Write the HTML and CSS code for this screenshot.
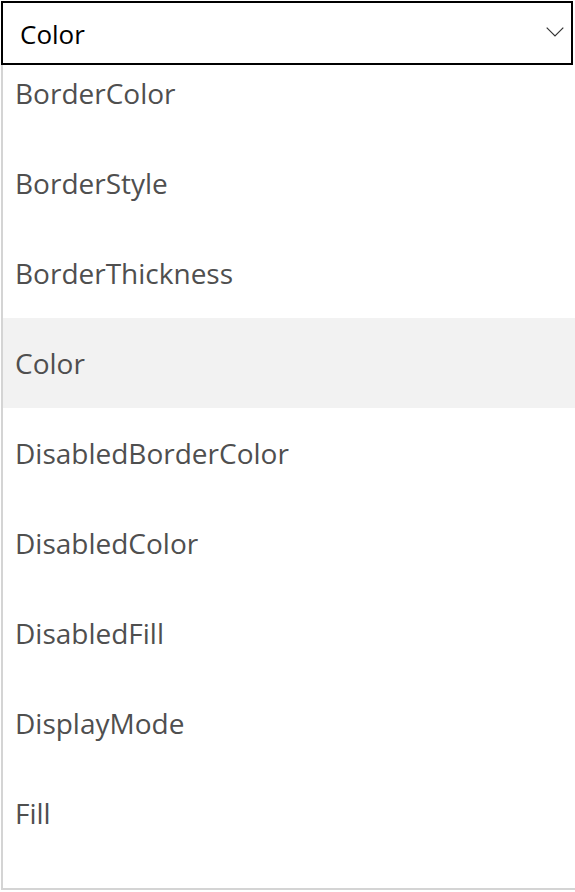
FILE: index.html
```html
<!DOCTYPE html>
<html>
<head>
<meta charset="utf-8">
<link rel="stylesheet" href="styles.css">
</head>
<body>
<div class="page">
  <div class="select">
    <span class="select-value">Color</span>
    <svg class="chevron" width="18" height="10" viewBox="0 0 18 10"><path d="M0.7 0.7 L9 9 L17.3 0.7" fill="none" stroke="#333" stroke-width="1.2"/></svg>
  </div>
  <div class="list">
    <div class="list-inner">
      <div class="item">BorderColor</div>
      <div class="item">BorderStyle</div>
      <div class="item">BorderThickness</div>
      <div class="item item-active">Color</div>
      <div class="item">DisabledBorderColor</div>
      <div class="item">DisabledColor</div>
      <div class="item">DisabledFill</div>
      <div class="item">DisplayMode</div>
      <div class="item">Fill</div>
      <div class="item"></div>
    </div>
  </div>
</div>
</body>
</html>
```
FILE: styles.css
```css
html, body {
  margin: 0;
  padding: 0;
  background: #ffffff;
}
.page {
  width: 575px;
  height: 892px;
  overflow: hidden;
  font-family: "Open Sans", "Noto Sans", sans-serif;
  padding-top: 1px;
  padding-left: 1px;
  box-sizing: border-box;
}
.select {
  width: 572px;
  height: 64px;
  box-sizing: border-box;
  border: 2px solid #000000;
  display: flex;
  align-items: center;
  justify-content: space-between;
  padding: 0 7px 0 17px;
  font-size: 26px;
  color: #000000;
}
.select-value {
  margin-top: 1px;
}
.chevron {
  display: block;
  margin-top: -2px;
}
.list {
  width: 574px;
  height: 825px;
  box-sizing: border-box;
  border-left: 2px solid #d4d4d4;
  border-bottom: 2px solid #d4d4d4;
  overflow: hidden;
}
.list-inner {
  margin-top: -17px;
}
.item {
  height: 90px;
  display: flex;
  align-items: center;
  padding-left: 12px;
  font-size: 28px;
  color: #4f4f4f;
}
.item-active {
  background: #f2f2f2;
}
```
